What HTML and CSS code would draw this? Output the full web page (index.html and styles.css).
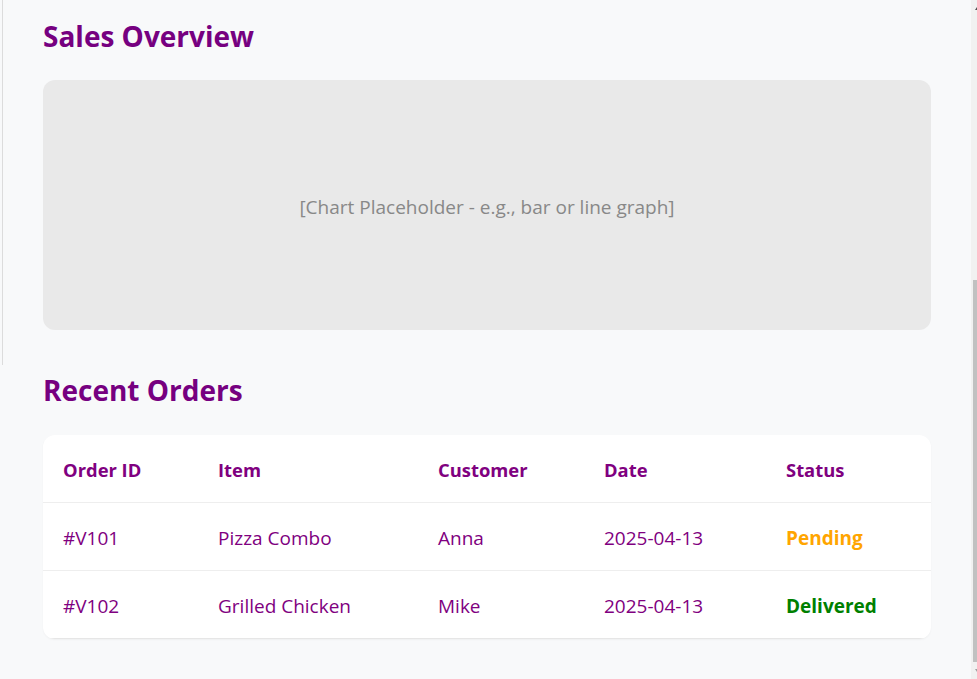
FILE: index.html
```html
<!DOCTYPE html>
<html lang="en">
<head>
<meta charset="utf-8">
<title>Dashboard</title>
<link rel="stylesheet" href="styles.css">
</head>
<body>
<div class="layout">
  <aside class="sidebar"></aside>
  <main class="main">
    <section class="section">
      <h2 class="section-title">Sales Overview</h2>
      <div class="chart">[Chart Placeholder - e.g., bar or line graph]</div>
    </section>
    <section class="section">
      <h2 class="section-title">Recent Orders</h2>
      <div class="card">
        <table class="orders">
          <colgroup>
            <col class="c-id"><col class="c-item"><col class="c-cust"><col class="c-date"><col class="c-status">
          </colgroup>
          <thead>
            <tr><th>Order ID</th><th>Item</th><th>Customer</th><th>Date</th><th>Status</th></tr>
          </thead>
          <tbody>
            <tr><td>#V101</td><td>Pizza Combo</td><td>Anna</td><td>2025-04-13</td><td class="status pending">Pending</td></tr>
            <tr><td>#V102</td><td>Grilled Chicken</td><td>Mike</td><td>2025-04-13</td><td class="status delivered">Delivered</td></tr>
          </tbody>
        </table>
      </div>
    </section>
  </main>
</div>
<div class="scrollbar">
  <span class="arrow up"></span>
  <div class="thumb"></div>
  <span class="arrow down"></span>
</div>
</body>
</html>
```
FILE: styles.css
```css
* { box-sizing: border-box; }
html, body { margin: 0; padding: 0; }
body {
  background: #f8f9fa;
  font-family: "Open Sans", "Noto Sans", sans-serif;
  color: #800080;
  height: 679px;
  overflow: hidden;
}
.layout {
  display: flex;
  align-items: flex-start;
}
.sidebar {
  width: 3px;
  height: 365px;
  border-right: 1px solid #dcdcdc;
  flex: none;
}
.main {
  flex: 1;
  padding: 0 46px 0 40px;
}
.section-title {
  margin: 0;
  font-size: 28px;
  font-weight: 700;
  line-height: 1.2;
  color: #760080;
}
.section:first-child .section-title { padding-top: 20px; }
.chart {
  margin-top: 26px;
  height: 250px;
  padding-top: 4px;
  background: #e9e9e9;
  border-radius: 12px;
  display: flex;
  align-items: center;
  justify-content: center;
  color: #888;
  font-size: 19px;
}
.section + .section { margin-top: 44px; }
.card {
  margin-top: 28px;
  background: #fff;
  border-radius: 12px;
  overflow: hidden;
  box-shadow: 0 1px 2px rgba(0,0,0,0.04);
}
.orders {
  width: 100%;
  border-collapse: collapse;
  table-layout: fixed;
  font-size: 19px;
}
.c-id { width: 155px; }
.c-item { width: 220px; }
.c-cust { width: 166px; }
.c-date { width: 182px; }
.c-status { width: auto; }
.orders th, .orders td {
  text-align: left;
  padding: 22px 20px 19px;
  line-height: 26px;
  vertical-align: middle;
  border-bottom: 1px solid #eee;
  color: #800080;
  white-space: nowrap;
}
.orders th { font-weight: 700; font-size: 18.4px; }
.orders td { font-weight: 400; }
.orders tbody tr:last-child td { border-bottom: 1px solid #e6e6e6; }
.orders .pending { color: #ffa500; font-weight: 700; }
.orders .delivered { color: #008000; font-weight: 700; }
.scrollbar {
  position: fixed;
  top: 0;
  right: 0;
  width: 6px;
  height: 679px;
  background: #f1f1f1;
}
.scrollbar .thumb {
  position: absolute;
  top: 280px;
  left: 2px;
  width: 4px;
  height: 382px;
  background: #c1c1c1;
}
.scrollbar .arrow {
  position: absolute;
  left: 4px;
  width: 0;
  height: 0;
  border-left: 2px solid transparent;
  border-right: 2px solid transparent;
}
.scrollbar .up { top: 7px; border-bottom: 3px solid #505050; }
.scrollbar .down { bottom: 7px; border-top: 3px solid #a0a0a0; }
```
